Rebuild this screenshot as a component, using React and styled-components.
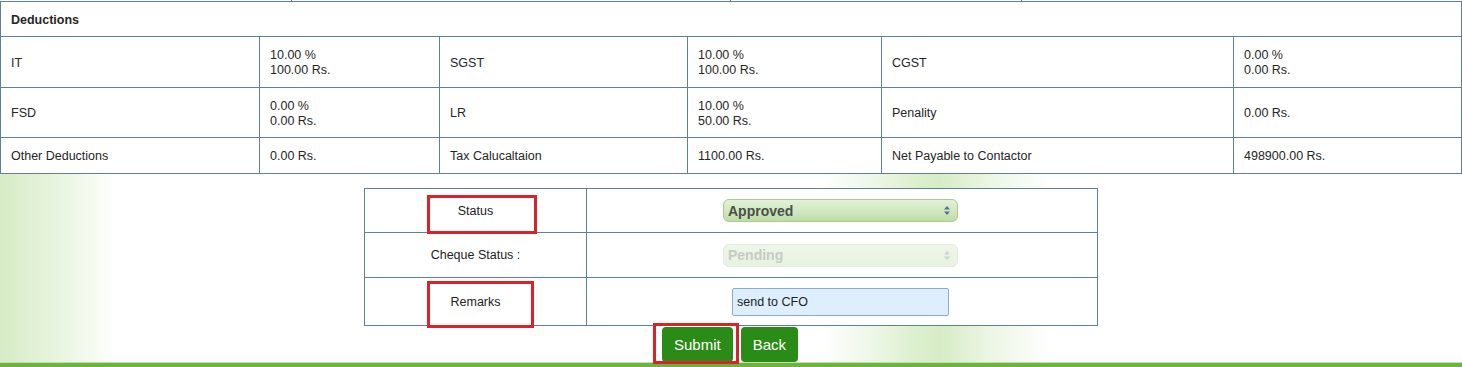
import React from "react";
import styled, { createGlobalStyle } from "styled-components";

const Global = createGlobalStyle`
  html, body { margin: 0; padding: 0; background: #fff; }
  body { font-family: "Liberation Sans", Arial, sans-serif; }
  * { box-sizing: border-box; }
`;

const LINE = "#5f7f9e";

const Page = styled.div`
  width: 1462px;
  height: 367px;
  display: flex;
  flex-direction: column;
  background:
    linear-gradient(to right,
      #d6ecc6 0px, #e6f3dc 50px, #f6fbf2 95px, #ffffff 115px,
      #ffffff 820px, #eef7e8 870px, #d9eeca 925px, #d6ecc6 940px,
      #eaf5e1 985px, #ffffff 1050px, #ffffff 100%);
  color: #262626;
  font-size: 12.5px;
`;

const PrevStrip = styled.div`
  height: 1px;
  display: grid;
  grid-template-columns: 292px 439px 291px 1fr;
  background: #fff;
`;

const PrevCell = styled.div`
  border-right: 1px solid ${LINE};
`;

const Table = styled.table`
  width: 1461px;
  border-collapse: collapse;
  table-layout: fixed;
  background: #fff;
`;

const Row = styled.tr`
  height: ${(p) => p.$h}px;
`;

const Cell = styled.td`
  border: 1px solid ${LINE};
  padding: 2px 10px 0;
  line-height: 15px;
  vertical-align: middle;
  font-weight: ${(p) => (p.$bold ? 700 : 400)};
`;

const FormTable = styled.table`
  width: 733px;
  margin: 14px auto 0;
  border-collapse: collapse;
  table-layout: fixed;
  background: #fff;
`;

const FormLabel = styled.td`
  position: relative;
  border: 1px solid ${LINE};
  text-align: center;
  vertical-align: middle;
  font-size: 12.5px;
  color: #222;
  padding: 0;
`;

const FormField = styled.td`
  border: 1px solid ${LINE};
  text-align: center;
  vertical-align: middle;
  padding: 0 3px 0 0;
`;

const Mark = styled.span`
  position: absolute;
  left: ${(p) => p.$l}px;
  top: ${(p) => p.$t}px;
  width: ${(p) => p.$w}px;
  height: ${(p) => p.$hh}px;
  border: 3px solid #d8232c;
  pointer-events: none;
  z-index: 2;
`;

const SelectWrap = styled.span`
  position: relative;
  display: inline-block;
  width: 235px;
  height: 23px;
  vertical-align: middle;
`;

const Select = styled.select`
  appearance: none;
  -webkit-appearance: none;
  width: 235px;
  height: 23px;
  border-radius: 6px;
  padding: 0 20px 0 4px;
  font-family: "Liberation Sans", Arial, sans-serif;
  font-size: 14px;
  font-weight: 700;
  border: 1px solid ${(p) => (p.disabled ? "#e2eedb" : "#a9cb90")};
  color: ${(p) => (p.disabled ? "#c6cbc4" : "#4b4f4a")};
  background: ${(p) =>
    p.disabled
      ? "linear-gradient(#eef6e9, #e7f2e0)"
      : "linear-gradient(#e3f1d7, #cfe6bd 60%, #bddca5)"};
  opacity: 1;
  outline: none;
`;

const Arrow = styled.svg`
  position: absolute;
  right: 8px;
  top: 7px;
  pointer-events: none;
`;

const TextInput = styled.input`
  width: 217px;
  height: 28px;
  border: 1px solid #86abd9;
  border-radius: 2px;
  background: #ddeefc;
  padding: 0 4px;
  font-family: "Liberation Sans", Arial, sans-serif;
  font-size: 12.5px;
  color: #222;
  outline: none;
  vertical-align: middle;
`;

const Buttons = styled.div`
  display: flex;
  justify-content: center;
  gap: 8px;
  margin-top: 1px;
  padding-right: 2px;
`;

const BtnWrap = styled.span`
  position: relative;
  display: inline-flex;
`;

const Button = styled.button`
  height: 35px;
  padding: 0 12px;
  border: none;
  border-radius: 4px;
  background: #2a8b16;
  color: #fff;
  font-family: "Liberation Sans", Arial, sans-serif;
  font-size: 15px;
  cursor: pointer;
`;

const Footer = styled.div`
  margin-top: auto;
  height: 5px;
  border-top: 1px solid #bfe0a8;
  background: #6cb43f;
`;

const SelectArrow = ({ light }) => (
  <Arrow width="6" height="9" viewBox="0 0 6 9">
    <path d="M3 0 L6 3.5 L0 3.5 Z" fill={light ? "#c9d3d8" : "#4f7396"} />
    <path d="M3 9 L6 5.5 L0 5.5 Z" fill={light ? "#c9d3d8" : "#4f7396"} />
  </Arrow>
);

const rows = [
  { h: 51, cells: ["IT", ["10.00 %", "100.00 Rs."], "SGST", ["10.00 %", "100.00 Rs."], "CGST", ["0.00 %", "0.00 Rs."]] },
  { h: 50, cells: ["FSD", ["0.00 %", "0.00 Rs."], "LR", ["10.00 %", "50.00 Rs."], "Penality", "0.00 Rs."] },
  { h: 36, cells: ["Other Deductions", "0.00 Rs.", "Tax Calucaltaion", "1100.00 Rs.", "Net Payable to Contactor", "498900.00 Rs."] },
];

const colWidths = [259, 180, 248, 194, 352, 228];

export default function App() {
  return (
    <>
      <Global />
      <Page>
        <PrevStrip>
          <PrevCell />
          <PrevCell />
          <PrevCell />
          <div />
        </PrevStrip>
        <Table>
          <colgroup>
            {colWidths.map((w, i) => (
              <col key={i} style={{ width: w }} />
            ))}
          </colgroup>
          <tbody>
            <Row $h={35}>
              <Cell colSpan={6} $bold>Deductions</Cell>
            </Row>
            {rows.map((r, i) => (
              <Row key={i} $h={r.h}>
                {r.cells.map((c, j) => (
                  <Cell key={j}>
                    {Array.isArray(c) ? (
                      <>
                        {c[0]}
                        <br />
                        {c[1]}
                      </>
                    ) : (
                      c
                    )}
                  </Cell>
                ))}
              </Row>
            ))}
          </tbody>
        </Table>

        <FormTable>
          <colgroup>
            <col style={{ width: 222 }} />
            <col style={{ width: 511 }} />
          </colgroup>
          <tbody>
            <Row $h={44}>
              <FormLabel>
                Status
                <Mark $l={62} $t={6} $w={110} $hh={39} />
              </FormLabel>
              <FormField>
                <SelectWrap>
                  <Select defaultValue="Approved">
                    <option>Approved</option>
                    <option>Rejected</option>
                  </Select>
                  <SelectArrow />
                </SelectWrap>
              </FormField>
            </Row>
            <Row $h={45}>
              <FormLabel>Cheque Status :</FormLabel>
              <FormField>
                <SelectWrap>
                  <Select disabled defaultValue="Pending">
                    <option>Pending</option>
                  </Select>
                  <SelectArrow light />
                </SelectWrap>
              </FormField>
            </Row>
            <Row $h={48}>
              <FormLabel>
                Remarks
                <Mark $l={62} $t={3} $w={107} $hh={47} />
              </FormLabel>
              <FormField>
                <TextInput defaultValue="send to CFO" readOnly />
              </FormField>
            </Row>
          </tbody>
        </FormTable>

        <Buttons>
          <BtnWrap>
            <Button>Submit</Button>
            <Mark $l={-9} $t={-4} $w={86} $hh={41} />
          </BtnWrap>
          <BtnWrap>
            <Button>Back</Button>
          </BtnWrap>
        </Buttons>
        <Footer />
      </Page>
    </>
  );
}
